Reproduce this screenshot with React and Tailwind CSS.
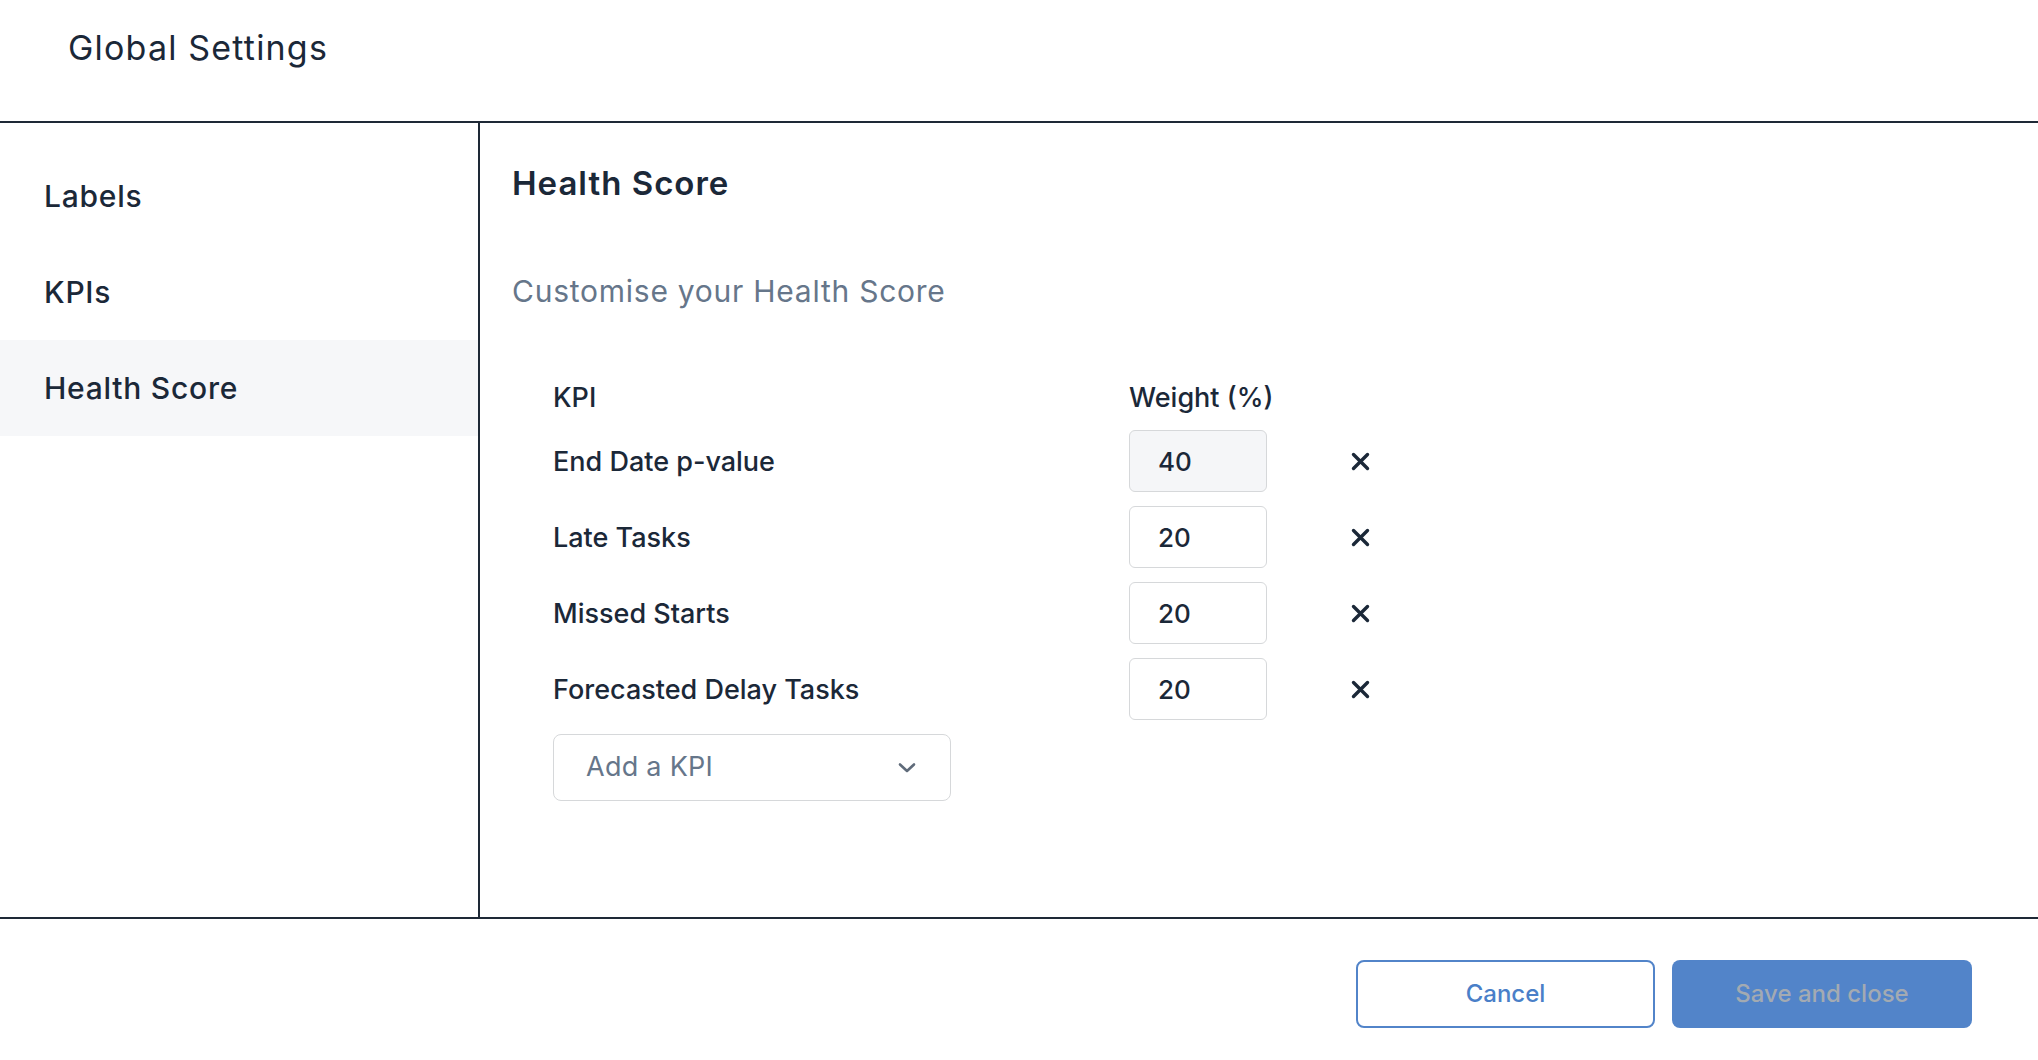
import React from "react";

const F = { fontFamily: "Inter, 'Noto Sans', sans-serif" };

function XIcon() {
  return (
    <svg width="19" height="19" viewBox="0 0 19 19" fill="none">
      <path d="M2.5 2.5 L16.5 16.5 M16.5 2.5 L2.5 16.5" stroke="#1b2838" strokeWidth="3.4" strokeLinecap="round" />
    </svg>
  );
}

function Chevron() {
  return (
    <svg width="18" height="12" viewBox="0 0 18 12" fill="none">
      <path d="M2 2.5 L9 9 L16 2.5" stroke="#5f6b7a" strokeWidth="2.6" strokeLinecap="round" strokeLinejoin="round" />
    </svg>
  );
}

const rows = [
  { name: "End Date p-value", value: "40", disabled: true },
  { name: "Late Tasks", value: "20" },
  { name: "Missed Starts", value: "20" },
  { name: "Forecasted Delay Tasks", value: "20" },
];

export default function App() {
  return (
    <div className="w-[2038px] h-[1060px] bg-white flex flex-col text-[#1b2838] overflow-hidden" style={F}>
      <header className="h-[121px] shrink-0 pl-[68px] pt-[28px]">
        <h1 className="text-[34px] leading-[40px] font-normal tracking-[0.035em]">Global Settings</h1>
      </header>
      <div className="h-[2px] bg-[#1e2936] shrink-0" />
      <div className="flex flex-1 min-h-0">
        <nav className="w-[478px] shrink-0 pt-[25px]">
          {["Labels", "KPIs", "Health Score"].map((l) => (
            <div
              key={l}
              className={`h-[96px] flex items-center pl-[44px] text-[30px] font-medium tracking-[0.025em] ${l === "Health Score" ? "bg-[#f6f7f9]" : ""}`}
            >
              {l}
            </div>
          ))}
        </nav>
        <div className="w-[2px] bg-[#1e2936] shrink-0" />
        <main className="flex-1 pl-[32px] pt-[40px]">
          <h2 className="text-[33px] leading-[40px] font-semibold tracking-[0.03em]">Health Score</h2>
          <p className="mt-[68px] text-[30px] leading-[40px] text-[#66768a] tracking-[0.025em]">Customise your Health Score</p>
          <div className="mt-[71px] pl-[41px]">
            <div className="flex h-[32px] items-center text-[27px] font-medium leading-[32px]">
              <div className="w-[576px]">KPI</div>
              <div>Weight (%)</div>
            </div>
            <div className="mt-[16px] flex flex-col gap-[14px]">
              {rows.map((r) => (
                <div key={r.name} className="flex items-center h-[62px]">
                  <div className="w-[576px] text-[27px] font-medium pt-[2px]">{r.name}</div>
                  <div
                    className={`w-[138px] h-[62px] rounded-[6px] border-[1.5px] border-[#d6d8da] flex items-center pl-[28px] text-[26px] font-medium ${r.disabled ? "bg-[#f5f6f8]" : "bg-white"}`}
                  >
                    {r.value}
                  </div>
                  <div className="ml-[84px] flex items-center">
                    <XIcon />
                  </div>
                </div>
              ))}
            </div>
            <div className="mt-[14px] w-[398px] h-[67px] rounded-[8px] border-[1.5px] border-[#d6d8da] flex items-center justify-between pl-[32px] pr-[34px]">
              <span className="text-[27px] text-[#66768a] tracking-[0.01em]">Add a KPI</span>
              <Chevron />
            </div>
          </div>
        </main>
      </div>
      <div className="h-[2px] bg-[#1e2936] shrink-0" />
      <footer className="h-[141px] shrink-0 flex items-start justify-end pr-[66px] pt-[41px] gap-[17px]">
        <button className="w-[299px] h-[68px] rounded-[8px] border-2 border-[#5284c9] bg-white text-[#4a7fc8] text-[24px] font-medium">
          Cancel
        </button>
        <button className="w-[300px] h-[68px] rounded-[8px] bg-[#5284c9] text-[#a3aab2] text-[24px] font-medium">
          Save and close
        </button>
      </footer>
    </div>
  );
}
